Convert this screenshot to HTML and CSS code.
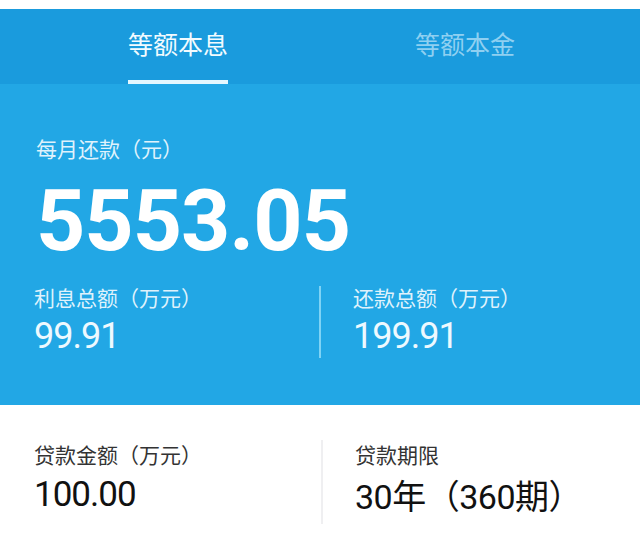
FILE: index.html
```html
<!DOCTYPE html>
<html lang="zh-CN">
<head>
    <meta charset="UTF-8">
    <meta name="viewport" content="width=device-width, initial-scale=1.0">
    <title>房贷计算结果</title>
    <link rel="stylesheet" href="styles.css">
</head>
<body>

<div class="calc">
    <!-- repayment method tabs -->
    <div class="tabs">
        <div class="tab active">等额本息</div>
        <div class="tab">等额本金</div>
    </div>

    <!-- result panel -->
    <div class="summary">
        <p class="sum-label">每月还款（元）</p>
        <p class="monthly">5553.05</p>

        <div class="split">
            <div class="cell">
                <p class="sum-label">利息总额（万元）</p>
                <p class="sum-value">99.91</p>
            </div>
            <div class="cell right">
                <p class="sum-label">还款总额（万元）</p>
                <p class="sum-value">199.91</p>
            </div>
        </div>
    </div>

    <!-- loan input values -->
    <div class="loan">
        <div class="cell">
            <p class="loan-label">贷款金额（万元）</p>
            <p class="loan-value">100.00</p>
        </div>
        <div class="cell right">
            <p class="loan-label">贷款期限</p>
            <p class="loan-value term">30年（360期）</p>
        </div>
    </div>
</div>

</body>
</html>
```

FILE: styles.css
```css
body{
    margin: 0;
    background: #fff;
    font-family: Roboto, "Noto Sans CJK SC", sans-serif;
}

p{
    margin: 0;
}

.calc{
    padding-top: 9px;
}

/* top tabs */
.tabs{
    display: flex;
    gap: 187px;
    height: 75px;
    padding-left: 128px;
    background: #1a9bdd;
    box-sizing: border-box;
}

.tab{
    width: 100px;
    padding-top: 24px;
    font-size: 25px;
    line-height: 1;
    color: #8fd0f1;
    white-space: nowrap;
}

.tab.active{
    color: #f2fbff;
    border-bottom: 4px solid #e4f7ff;
}

/* blue result panel */
.summary{
    height: 321px;
    padding: 56px 0 0 36px;
    box-sizing: border-box;
    background: #22a7e5;
    color: #fff;
}

.sum-label{
    font-size: 21px;
    line-height: 1;
    color: #dff2fc;
}

.monthly{
    margin-top: 17px;
    font-size: 86px;
    font-weight: 700;
    line-height: 1;
    letter-spacing: -1px;
}

.split{
    display: grid;
    grid-template-columns: 285px 1fr;
    margin-top: 22px;
    margin-left: -2px;
}

.split .cell{
    padding: 3px 0 4px;
}

.split .right{
    border-left: 2px solid #7fd3f5;
    padding-left: 32px;
}

.sum-value{
    margin-top: 8px;
    font-size: 36px;
    line-height: 1;
    letter-spacing: -1px;
    color: #eef9ff;
}

/* white loan info */
.loan{
    display: grid;
    grid-template-columns: 287px 1fr;
    padding: 35px 0 0 34px;
}

.loan .cell{
    padding: 6px 0 10px;
}

.loan .right{
    border-left: 2px solid #efeff1;
    padding-left: 32px;
}

.loan-label{
    font-size: 21px;
    line-height: 1;
    color: #333;
}

.loan-value{
    margin-top: 10px;
    font-size: 35px;
    line-height: 1;
    letter-spacing: -1px;
    color: #111;
}

.loan-value.term{
    margin-top: 13px;
    font-size: 34px;
    letter-spacing: -0.5px;
}
```
